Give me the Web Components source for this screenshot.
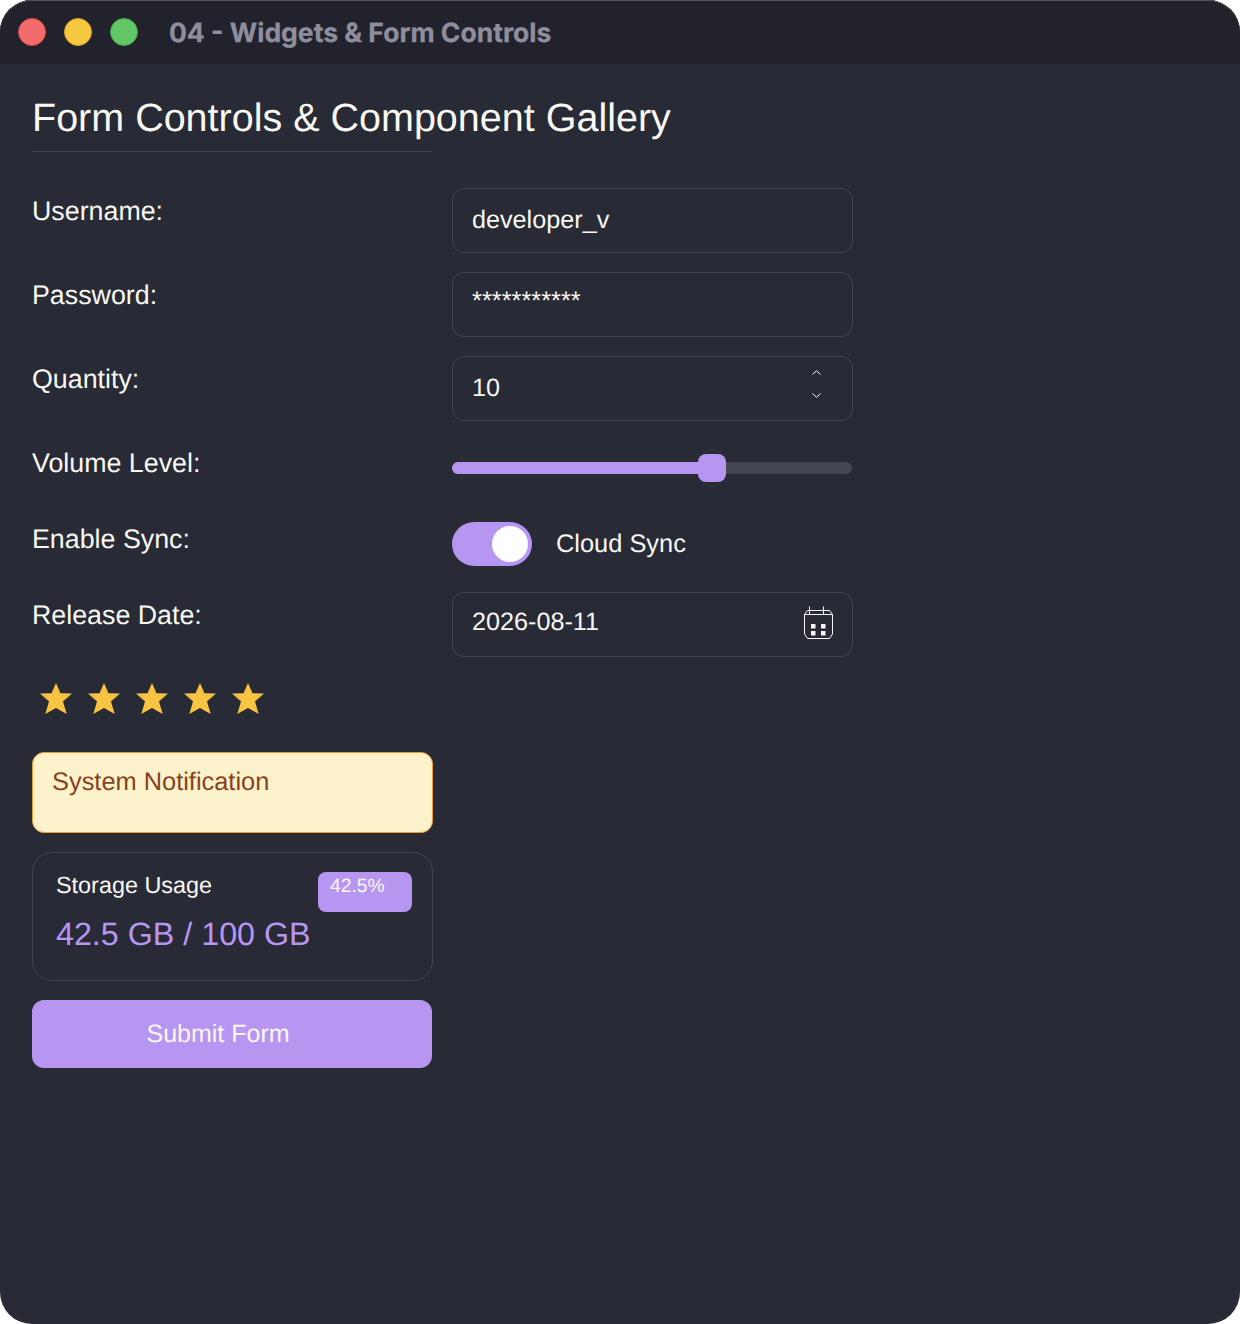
<!DOCTYPE html>
<html lang="en"><head><meta charset="utf-8"><title>Widgets</title>
<style>html,body{margin:0;background:#fff}body{width:1240px;height:1324px;overflow:hidden;font-family:"Liberation Sans",Arial,sans-serif;text-rendering:geometricPrecision}</style>
</head><body>
<app-window>
  <title-bar slot="bar">04 - Widgets &amp; Form Controls</title-bar>
  <page-heading>Form Controls &amp; Component Gallery</page-heading>
  <form-row label="Username:"><text-field>developer_v</text-field></form-row>
  <form-row label="Password:"><text-field class="pw">***********</text-field></form-row>
  <form-row label="Quantity:"><text-field kind="spin">10</text-field></form-row>
  <form-row label="Volume Level:" short><range-slider></range-slider></form-row>
  <form-row label="Enable Sync:" short><toggle-switch>Cloud Sync</toggle-switch></form-row>
  <form-row label="Release Date:"><text-field kind="date">2026-08-11</text-field></form-row>
  <star-rating></star-rating>
  <notice-box>System Notification</notice-box>
  <storage-card title="Storage Usage" value="42.5 GB / 100 GB" badge="42.5%"></storage-card>
  <submit-button>Submit Form</submit-button>
</app-window>
<script>
function def(name, css, html){
  customElements.define(name, class extends HTMLElement{
    constructor(){super();const r=this.attachShadow({mode:'open'});r.innerHTML='<style>'+css+'</style>'+(typeof html==='function'?html(this):html);}
  });
}
def('app-window',`
  :host{display:block;position:relative;width:1240px;height:1324px;background:#282a36;border-radius:32px;overflow:hidden;color:#f8f8f2}
  .body{display:flex;flex-direction:column;gap:20px;padding:20px 32px 0}
  .edge{position:absolute;inset:0;border-radius:inherit;box-shadow:inset 0 1px 0 #55565f;pointer-events:none}
`,`<slot name="bar"></slot><div class="body"><slot></slot></div><div class="edge"></div>`);
def('title-bar',`
  :host{display:flex;align-items:center;height:64px;background:#21222c;padding-left:18px;gap:18px;box-sizing:border-box}
  i{width:28px;height:28px;border-radius:50%;box-sizing:border-box;display:block;flex:none}
  .t{margin:2px 0 0 13px;font:700 26.500px Inter,sans-serif;color:#8e8e9e;white-space:nowrap;-webkit-text-stroke:.3px #8e8e9e}
`,`<i style="background:#f26b6d;border:1px solid #e0443e"></i><i style="background:#f4c93f;border:1px solid #dea123"></i><i style="background:#62c667;border:1px solid #3faa3f"></i><span class="t"><slot></slot></span>`);
def('page-heading',`
  :host{display:block;width:400px;height:68px;box-sizing:border-box;border-bottom:1px solid #444652;font-size:39.500px;line-height:68px;white-space:nowrap;margin-bottom:16px;color:#f8f8f2}
`,`<slot></slot>`);
def('form-row',`
  :host{display:grid;grid-template-columns:400px 400px;column-gap:20px;height:64px}
  :host([short]){height:56px}
  .l{font-size:26.800px;line-height:46px;height:46px;color:#f8f8f2;white-space:nowrap}
  .c{display:flex;align-items:flex-start;height:100%}
  :host([short]) .c{align-items:center}
`,h=>`<div class="l">${h.getAttribute('label')}</div><div class="c"><slot></slot></div>`);
def('text-field',`
  :host{display:flex;align-items:center;justify-content:space-between;width:401px;height:65px;flex:none;box-sizing:border-box;border:1px solid #444652;border-radius:12px;padding:0 19px;font-size:25.200px;color:#f8f8f2}
  :host(.pw){align-items:flex-start;padding-top:15px;font-size:25.400px}
  svg{display:block;flex:none}
  .spin{display:flex;flex-direction:column;gap:18px;margin-right:12px;margin-top:-9px}
  .cal{margin-top:-3px}
  .v{margin-top:-1px}
  .v.date{margin-top:-5px}
`,h=>{const k=h.getAttribute('kind');
  let x='';
  if(k==='spin')x=`<div class="spin"><svg width="9" height="5" viewBox="0 0 9 5" fill="none" stroke="#f8f8f2" stroke-width="1"><path d="M.5 4.500 4.500.7l4 3.800"/></svg><svg width="9" height="5" viewBox="0 0 9 5" fill="none" stroke="#f8f8f2" stroke-width="1"><path d="M.5.5l4 3.800 4-3.800"/></svg></div>`;
  if(k==='date')x=`<svg class="cal" width="30" height="34" viewBox="0 0 30 34" fill="none" stroke="#f8f8f2" stroke-width="1"><path d="M4.500 4.500H26.500L29.500 8.500V28L26.500 32.500H4.500L1.500 28V8.500Z"/><path d="M1.500 8.500H29.500M6.500.5V8.500M20.500.5V8.500"/><path fill="#f8f8f2" stroke="none" d="M8 18h4.500v4.500H8zM18 18h4.500v4.500H18zM8 25h4.500v4.500H8zM18 25h4.500v4.500H18z"/></svg>`;
  return `<span class="v ${k||''}"><slot></slot></span>${x}`;});
def('range-slider',`
  :host{display:block;width:400px;height:28px;position:relative}
  .t{position:absolute;left:0;right:0;top:8px;height:12px;border-radius:6px;background:#444652}
  .f{position:absolute;left:0;width:260px;top:8px;height:12px;border-radius:6px 0 0 6px;background:#b796f1}
  .h{position:absolute;left:246px;top:0;width:28px;height:28px;border-radius:8px;background:#b796f1}
`,`<div class="t"></div><div class="f"></div><div class="h"></div>`);
def('toggle-switch',`
  :host{display:flex;align-items:center;gap:24px;font-size:25.400px;color:#f8f8f2;height:56px}
  .s{width:80px;height:44px;border-radius:22px;background:#b796f1;position:relative}
  .k{position:absolute;left:40px;top:4px;width:36px;height:36px;border-radius:50%;background:#fff}
`,`<div class="s"><div class="k"></div></div><span><slot></slot></span>`);
def('star-rating',`
  :host{display:flex;height:56px;align-items:flex-start;gap:16px;padding:7px 0 0 8px;box-sizing:border-box}
  svg{display:block;flex:none;fill:#f6c343;overflow:visible}
`,()=>Array(5).fill(`<svg width="32" height="32" viewBox="0 0 32 32"><polygon points="16,0 20.500,10.300 32,10.500 23,18.500 26.700,31 16,25 5.300,31 9,18.500 0,10.500 11.500,10.300"/></svg>`).join(''));
def('notice-box',`
  :host{display:block;width:401px;height:81px;margin-bottom:-1px;box-sizing:border-box;background:#fbf2cc;border:1px solid #ed9a2e;border-radius:12px;padding:12px 19px;font-size:25.400px;line-height:34px;color:#87431c}
`,`<slot></slot>`);
def('storage-card',`
  :host{display:block;width:401px;height:129px;margin-bottom:-1px;box-sizing:border-box;border:1px solid #444652;border-radius:20px;position:relative;padding:18px 23px;color:#f8f8f2}
  .a{font-size:23.400px;line-height:28px}
  .b{font-size:32.250px;line-height:40px;color:#b796f1;margin-top:15px}
  .p{position:absolute;right:20px;top:19px;width:94px;height:40px;box-sizing:border-box;background:#b796f1;border-radius:8px;padding:3px 12px;font-size:19.300px;line-height:24px;color:#f8f8f2}
`,h=>`<div class="a">${h.getAttribute('title')}</div><div class="b">${h.getAttribute('value')}</div><div class="p">${h.getAttribute('badge')}</div>`);
def('submit-button',`
  :host{display:flex;width:400px;height:68px;align-items:center;justify-content:center;background:#b796f1;border-radius:12px;font-size:25px;color:#f8f8f2;padding-right:28px;box-sizing:border-box}
`,`<slot></slot>`);
</script>
</body></html>
